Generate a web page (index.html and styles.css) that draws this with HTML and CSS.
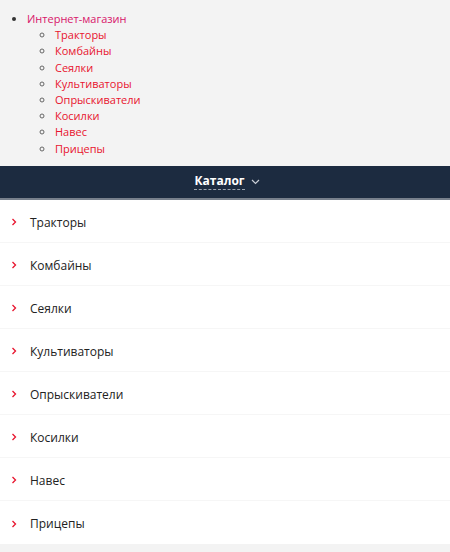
FILE: index.html
```html
<!DOCTYPE html>
<html lang="ru">
<head>
    <meta charset="UTF-8">
    <meta name="viewport" content="width=device-width, initial-scale=1.0">
    <title>Каталог</title>
    <link rel="stylesheet" href="styles.css">
</head>
<body>
    <ul class="site-map">
        <li><a href="#" class="shop-link">Интернет-магазин</a>
            <ul>
                <li><a href="#">Тракторы</a></li>
                <li><a href="#">Комбайны</a></li>
                <li><a href="#">Сеялки</a></li>
                <li><a href="#">Культиваторы</a></li>
                <li><a href="#">Опрыскиватели</a></li>
                <li><a href="#">Косилки</a></li>
                <li><a href="#">Навес</a></li>
                <li><a href="#">Прицепы</a></li>
            </ul>
        </li>
    </ul>

    <div class="catalog-bar">
        <span class="catalog-title">Каталог</span>
        <svg class="catalog-arrow" width="9" height="6" viewBox="0 0 9 6">
            <path d="M1 1 L4.5 4.5 L8 1" fill="none" stroke="#c9ced6" stroke-width="1.2"/>
        </svg>
    </div>

    <ul class="catalog-list">
        <li><svg class="arrow" width="6" height="8" viewBox="0 0 6 8"><path d="M1.5 1 L4.5 4 L1.5 7" fill="none" stroke="#e8142e" stroke-width="1.3"/></svg>Тракторы</li>
        <li><svg class="arrow" width="6" height="8" viewBox="0 0 6 8"><path d="M1.5 1 L4.5 4 L1.5 7" fill="none" stroke="#e8142e" stroke-width="1.3"/></svg>Комбайны</li>
        <li><svg class="arrow" width="6" height="8" viewBox="0 0 6 8"><path d="M1.5 1 L4.5 4 L1.5 7" fill="none" stroke="#e8142e" stroke-width="1.3"/></svg>Сеялки</li>
        <li><svg class="arrow" width="6" height="8" viewBox="0 0 6 8"><path d="M1.5 1 L4.5 4 L1.5 7" fill="none" stroke="#e8142e" stroke-width="1.3"/></svg>Культиваторы</li>
        <li><svg class="arrow" width="6" height="8" viewBox="0 0 6 8"><path d="M1.5 1 L4.5 4 L1.5 7" fill="none" stroke="#e8142e" stroke-width="1.3"/></svg>Опрыскиватели</li>
        <li><svg class="arrow" width="6" height="8" viewBox="0 0 6 8"><path d="M1.5 1 L4.5 4 L1.5 7" fill="none" stroke="#e8142e" stroke-width="1.3"/></svg>Косилки</li>
        <li><svg class="arrow" width="6" height="8" viewBox="0 0 6 8"><path d="M1.5 1 L4.5 4 L1.5 7" fill="none" stroke="#e8142e" stroke-width="1.3"/></svg>Навес</li>
        <li><svg class="arrow" width="6" height="8" viewBox="0 0 6 8"><path d="M1.5 1 L4.5 4 L1.5 7" fill="none" stroke="#e8142e" stroke-width="1.3"/></svg>Прицепы</li>
    </ul>
</body>
</html>
```

FILE: styles.css
```css
body {
    margin: 0;
    font-family: "Open Sans", "Noto Sans", sans-serif;
    background-color: #f3f3f3;
}

.site-map {
    margin: 0;
    padding: 11px 0 9px 27px;
    font-size: 11px;
    line-height: 16.2px;
    color: #333;
}

.site-map ul {
    margin: 0;
    padding-left: 28px;
    list-style-type: circle;
    color: #666;
}

.site-map a {
    color: #e8142e;
    text-decoration: none;
}

.site-map .shop-link {
    color: #d8156a;
}

.catalog-bar {
    height: 32px;
    background-color: #1c2b40;
    border-bottom: 2px solid #77808c;
    display: flex;
    align-items: center;
    justify-content: center;
    gap: 6px;
}

.catalog-title {
    color: #fff;
    font-weight: bold;
    font-size: 12px;
    border-bottom: 1px dashed #9aa3ae;
    line-height: 16px;
    margin-left: 4px;
}

.catalog-arrow {
    margin-top: 1px;
}

.catalog-list {
    list-style: none;
    margin: 0;
    padding: 0;
    background-color: #fff;
}

.catalog-list li {
    box-sizing: border-box;
    height: 43px;
    padding-top: 3px;
    border-bottom: 1px solid #f6f6f6;
    display: flex;
    align-items: center;
    font-size: 12px;
    color: #222;
}

.catalog-list li:last-child {
    border-bottom: none;
}

.arrow {
    margin: 0 13px 0 11px;
}
```
